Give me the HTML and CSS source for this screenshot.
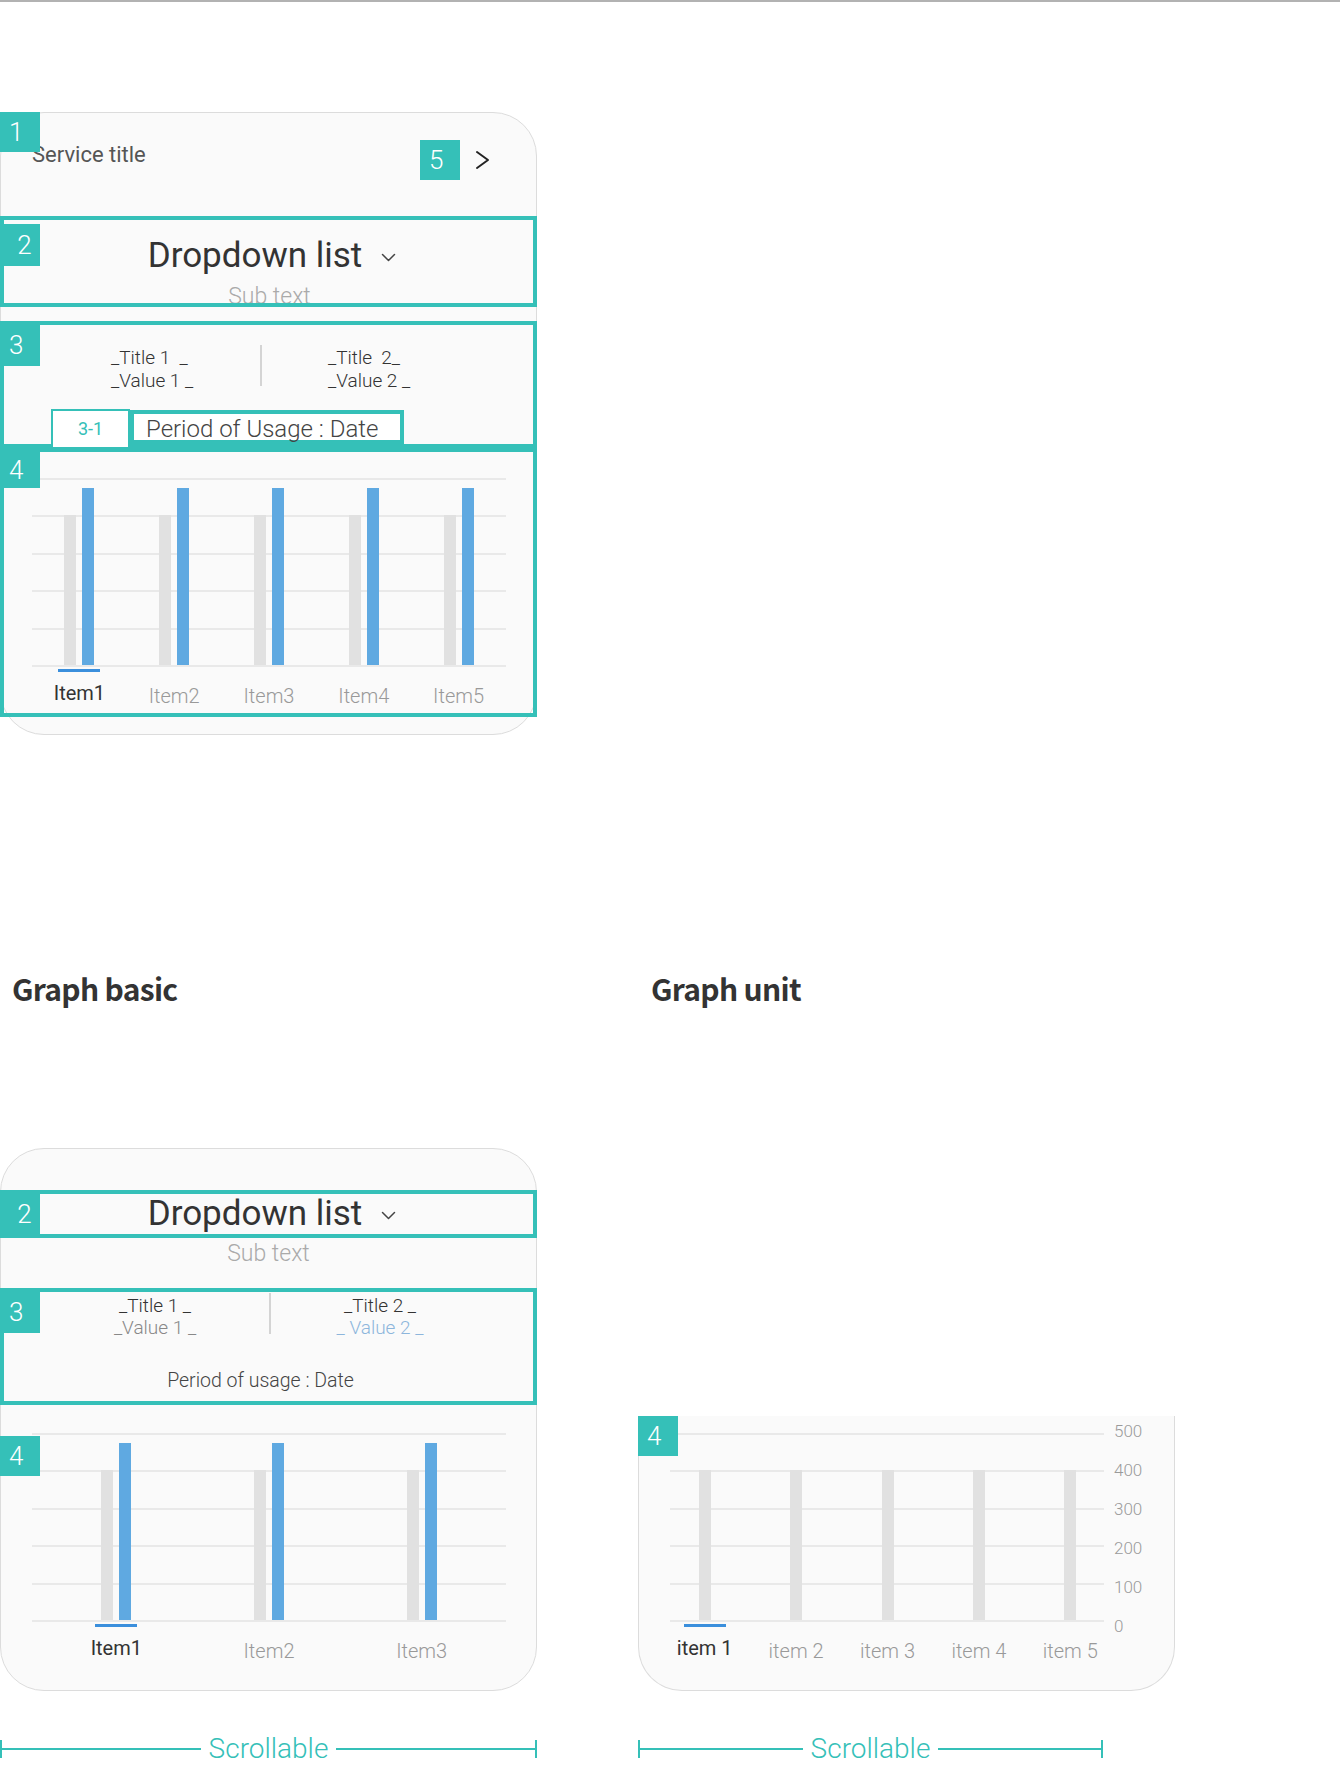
FILE: index.html
```html
<!DOCTYPE html>
<html lang="en">
<head>
<meta charset="utf-8">
<meta name="viewport" content="width=device-width, initial-scale=1">
<title>Graph card guide</title>
<link rel="stylesheet" href="styles.css">
</head>
<body>
<div class="rule"></div>

<!-- full card with all parts marked -->
<div class="card card-full">
  <span class="tag pin t1">1</span>
  <div class="head">
    <span class="svc">Service title</span>
    <span class="tag">5</span>
    <svg class="more" viewBox="0 0 15 20" fill="none" stroke="#222" stroke-width="2" stroke-linecap="round" stroke-linejoin="round"><path d="M2 2l11 8-11 8"/></svg>
  </div>

  <div class="box dd">
    <span class="tag pin t2">2</span>
    <div class="dd-title">Dropdown list<svg class="caret" viewBox="0 0 15 9" fill="none" stroke="#444" stroke-width="1.5" stroke-linecap="round" stroke-linejoin="round"><path d="M1.5 1.5l6 6 6-6"/></svg></div>
    <div class="dd-sub">Sub text</div>
  </div>

  <div class="box sum">
    <span class="tag pin t3">3</span>
    <div class="stats">
      <div class="stat s1"><div>_Title 1 &nbsp;_</div><div>_Value 1 _</div></div>
      <div class="vr"></div>
      <div class="stat s2"><div>_Title &nbsp;2_</div><div>_Value 2 _</div></div>
    </div>
    <div class="period-row">
      <span class="subtag">3-1</span>
      <span class="period">Period of Usage : Date</span>
    </div>
  </div>

  <div class="box chart">
    <span class="tag pin t4">4</span>
    <div class="plot">
      <div class="col"><i class="bar prev"></i><i class="bar cur"></i></div>
      <div class="col"><i class="bar prev"></i><i class="bar cur"></i></div>
      <div class="col"><i class="bar prev"></i><i class="bar cur"></i></div>
      <div class="col"><i class="bar prev"></i><i class="bar cur"></i></div>
      <div class="col"><i class="bar prev"></i><i class="bar cur"></i></div>
    </div>
    <div class="labels">
      <span class="lab on">Item1</span>
      <span class="lab">Item2</span>
      <span class="lab">Item3</span>
      <span class="lab">Item4</span>
      <span class="lab">Item5</span>
    </div>
  </div>
</div>

<div class="bottom">
  <h2 class="h2">Graph basic</h2>
  <h2 class="h2 h2-r">Graph unit</h2>

  <!-- graph basic -->
  <div class="card card-basic">
    <div class="box dd2">
      <span class="tag pin t2b">2</span>
      <div class="dd-title">Dropdown list<svg class="caret" viewBox="0 0 15 9" fill="none" stroke="#444" stroke-width="1.5" stroke-linecap="round" stroke-linejoin="round"><path d="M1.5 1.5l6 6 6-6"/></svg></div>
    </div>
    <div class="sub2">Sub text</div>

    <div class="box sum2">
      <span class="tag pin t3">3</span>
      <div class="stats">
        <div class="stat s1b"><div>_Title 1 _</div><div class="v1">_Value 1 _</div></div>
        <div class="vr vr2"></div>
        <div class="stat s2b"><div>_Title 2 _</div><div class="v2">_ Value 2 _</div></div>
      </div>
      <div class="period2">Period of usage : Date</div>
    </div>

    <div class="chart2">
      <span class="tag pin t4b">4</span>
      <div class="plot inset">
        <div class="col"><i class="bar prev"></i><i class="bar cur"></i></div>
        <div class="col"><i class="bar prev"></i><i class="bar cur"></i></div>
        <div class="col"><i class="bar prev"></i><i class="bar cur"></i></div>
      </div>
      <div class="labels inset">
        <span class="lab on">Item1</span>
        <span class="lab">Item2</span>
        <span class="lab">Item3</span>
      </div>
    </div>
  </div>

  <!-- graph unit -->
  <div class="card card-unit">
    <span class="tag pin t4c">4</span>
    <div class="unit-body">
      <div class="plot-wrap">
        <div class="plot plot-u">
          <div class="bars-u">
            <div class="col"><i class="bar prev"></i></div>
            <div class="col"><i class="bar prev"></i></div>
            <div class="col"><i class="bar prev"></i></div>
            <div class="col"><i class="bar prev"></i></div>
            <div class="col"><i class="bar prev"></i></div>
          </div>
        </div>
        <div class="labels labels-u">
          <span class="lab on">item 1</span>
          <span class="lab">item 2</span>
          <span class="lab">item 3</span>
          <span class="lab">item 4</span>
          <span class="lab">item 5</span>
        </div>
      </div>
      <div class="axis">
        <span>500</span><span>400</span><span>300</span><span>200</span><span>100</span><span>0</span>
      </div>
    </div>
  </div>

  <div class="scroll"><span>Scrollable</span></div>
  <div class="scroll scroll-r"><span>Scrollable</span></div>
</div>
</body>
</html>
```

FILE: styles.css
```css
*{box-sizing:border-box;}
html,body{margin:0;background:#fff;}
body{ color:#333; font-family:Roboto,"Noto Sans",Arial,sans-serif; }
.rule{ height:2px; background:#b2b2b2; }

/* 카드 공통 */
.card{ position:relative; width:537px; background:#fafafa; border:1px solid #dcdcdc; border-radius:44px; }
.card-full{ margin-top:110px; padding-bottom:17px; }

/* 번호 표시 */
.tag{ display:block; width:40px; height:40px; background:#35c0b8; color:#fff; font-size:26px; font-weight:300; line-height:40px; padding-left:9px; flex:0 0 auto; }
.pin{ position:absolute; z-index:2; }
.t1{ top:-1px; left:-1px; }
.t2{ top:4px; left:-4px; height:42px; line-height:42px; }
.t3{ top:-1px; left:-4px; height:42px; line-height:42px; }
.t4{ top:0; left:-4px; height:36px; line-height:36px; }

.head{ display:flex; align-items:center; height:103px; padding:27px 46px 36px 31px; }
.svc{ flex:1; font-size:22px; color:#555; margin-top:-11px; }
.more{ width:15px; height:20px; margin-left:15px; }

.box{ position:relative; margin:0 -1px; border:4px solid #35c0b8; }

.dd{ height:91px; padding:15px 0 0 7px; text-align:center; }
.dd-title{ font-size:35px; line-height:42px; color:#333; }
.caret{ width:15px; height:9px; margin-left:19px; vertical-align:middle; }
.dd-sub{ height:19px; overflow:hidden; margin:7px 5px 0 0; font-size:23px; line-height:25px; font-weight:300; color:#aaa; }

.sum{ height:127px; margin-top:14px; padding-top:21px; }
.stats{ display:flex; align-items:flex-start; }
.stat{ font-size:19px; line-height:23px; font-weight:300; color:#333; white-space:nowrap; }
.s1{ width:256px; padding-left:107px; }
.s2{ padding-left:66px; }
.vr{ width:2px; height:41px; margin-top:-1px; background:#d4d4d4; }

.period-row{ position:relative; z-index:1; display:flex; align-items:flex-start; margin:17px 0 0 47px; }
.subtag{ width:79px; height:40px; border:2px solid #35c0b8; background:#fff; color:#35c0b8; font-size:18px; line-height:36px; text-align:center; }
.period{ width:274px; height:34px; margin-top:1px; border:4px solid #35c0b8; background:#fff; padding-left:12px; font-size:24px; font-weight:300; line-height:30px; color:#444; white-space:nowrap; }

/* 그래프 */
.chart{ height:269px; padding:26px 27px 0 28px; }
.plot{ height:189px; display:flex; align-items:flex-end; padding-bottom:2px;
  background:repeating-linear-gradient(to bottom,#e9e9e9 0,#e9e9e9 2px,transparent 2px,transparent 37.4px); }
.col{ flex:1; display:flex; justify-content:center; align-items:flex-end; gap:6px; }
.bar{ display:block; width:12px; }
.bar.prev{ height:150px; background:#e1e1e1; }
.bar.cur{ height:177px; background:#5fa9e1; }

.labels{ display:flex; }
.lab{ flex:1; display:flex; flex-direction:column; align-items:center; font-size:20px; line-height:24px; font-weight:300; color:#999; white-space:nowrap; }
.lab::before{ content:""; width:42px; height:3px; margin:2px 0 12px; }
.lab.on{ color:#333; font-weight:400; }
.lab.on::before{ background:#3b8fdc; margin-bottom:9px; }

/* 하단 두 칸 */
.bottom{ display:grid; grid-template-columns:537px 537px; column-gap:101px; margin-top:235px; }
.h2{ margin:0 0 142px; padding-left:12px; font-family:"Noto Sans CJK KR","Noto Sans",sans-serif; font-weight:700; font-size:30px; letter-spacing:-.7px; line-height:36px; color:#333; }
.h2-r{ padding-left:13px; }

.card-basic{ padding:41px 0 27px; align-self:end; }
.dd2{ height:48px; padding-left:7px; text-align:center; }
.dd2 .dd-title{ line-height:40px; }
.t2b{ top:-4px; left:-4px; height:48px; line-height:48px; }
.sub2{ margin-top:3px; text-align:center; font-size:23px; line-height:25px; font-weight:300; color:#aaa; }

.sum2{ height:117px; margin-top:22px; padding-top:3px; }
.sum2 .stat{ line-height:22px; }
.s1b{ width:265px; padding-left:37px; text-align:center; }
.s2b{ flex:1; padding-right:44px; text-align:center; }
.vr2{ margin-top:-2px; }
.v1{ color:#888; }
.v2{ color:#8db6dc; }
.period2{ margin-top:30px; padding-right:16px; text-align:center; font-size:19.5px; line-height:23px; font-weight:300; color:#444; }

.chart2{ position:relative; padding:28px 30px 0 31px; }
.t4b{ top:31px; left:-1px; }
.inset{ padding-left:8px; padding-right:8px; }

.card-unit{ align-self:end; border-top:0; border-radius:0 0 44px 44px; padding:17px 0 27px; }
.t4c{ top:0; left:-1px; }
.unit-body{ display:flex; padding-left:31px; }
.plot-wrap{ width:434px; flex:0 0 auto; }
.plot-u{ display:block; }
.bars-u{ display:flex; height:100%; align-items:flex-end; margin:0 -12px 0 -11px; }
.labels-u{ margin:0 -12px 0 -11px; }
.axis{ height:189px; margin:-21px 0 0 10px; display:flex; flex-direction:column; font-size:17px; line-height:39px; font-weight:300; color:#9a9a9a; }

.scroll{ display:flex; align-items:center; height:18px; margin-top:49px; border-left:2px solid #35c0b8; border-right:2px solid #35c0b8; }
.scroll::before,.scroll::after{ content:""; flex:1; height:2px; background:#35c0b8; }
.scroll span{ padding:0 8px; font-size:28px; line-height:18px; font-weight:300; color:#35c0b8; }
.scroll-r{ width:465px; }
```
